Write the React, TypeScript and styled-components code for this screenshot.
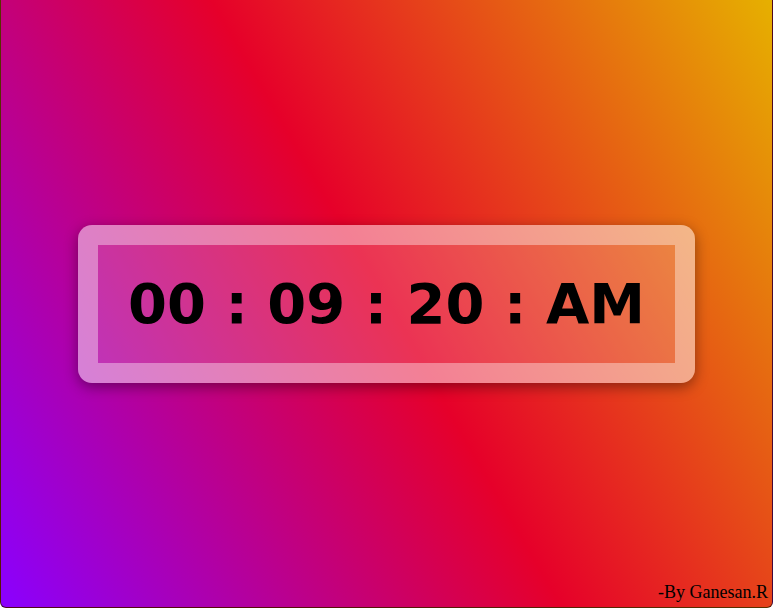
import React from "react";
import styled, { createGlobalStyle } from "styled-components";

const Global = createGlobalStyle`
  html, body { margin: 0; padding: 0; background: #fff; }
  * { box-sizing: border-box; }
`;

const Page = styled.div`
  height: 100vh;
  display: grid;
  grid-template-rows: 1fr auto 1fr;
  justify-items: center;
  background: linear-gradient(60deg, #8a00ff 0%, #e6002a 50%, #e6b000 100%);
  border: 1px solid rgba(40, 10, 0, 0.75);
  border-top: none;
  border-radius: 0 0 6px 6px;
`;

const Clock = styled.div`
  grid-row: 2;
  border: 20px solid rgba(255, 255, 255, 0.38);
  background: rgba(255, 255, 255, 0.2);
  background-clip: border-box;
  border-radius: 14px;
  box-shadow: 0 4px 14px rgba(0, 0, 0, 0.4);
`;

const Time = styled.div`
  font-family: "DejaVu Sans", sans-serif;
  font-weight: bold;
  font-size: 56px;
  line-height: 118px;
  padding: 0 30px;
  color: #000;
  white-space: pre;
`;

const Footer = styled.div`
  grid-row: 3;
  justify-self: end;
  align-self: end;
  font-family: "Liberation Serif", serif;
  font-size: 18px;
  color: #000;
  padding: 0 4px 4px 0;
`;

export default function App() {
  return (
    <>
      <Global />
      <Page>
        <Clock>
          <Time>00 : 09 : 20 : AM</Time>
        </Clock>
        <Footer>-By Ganesan.R</Footer>
      </Page>
    </>
  );
}
